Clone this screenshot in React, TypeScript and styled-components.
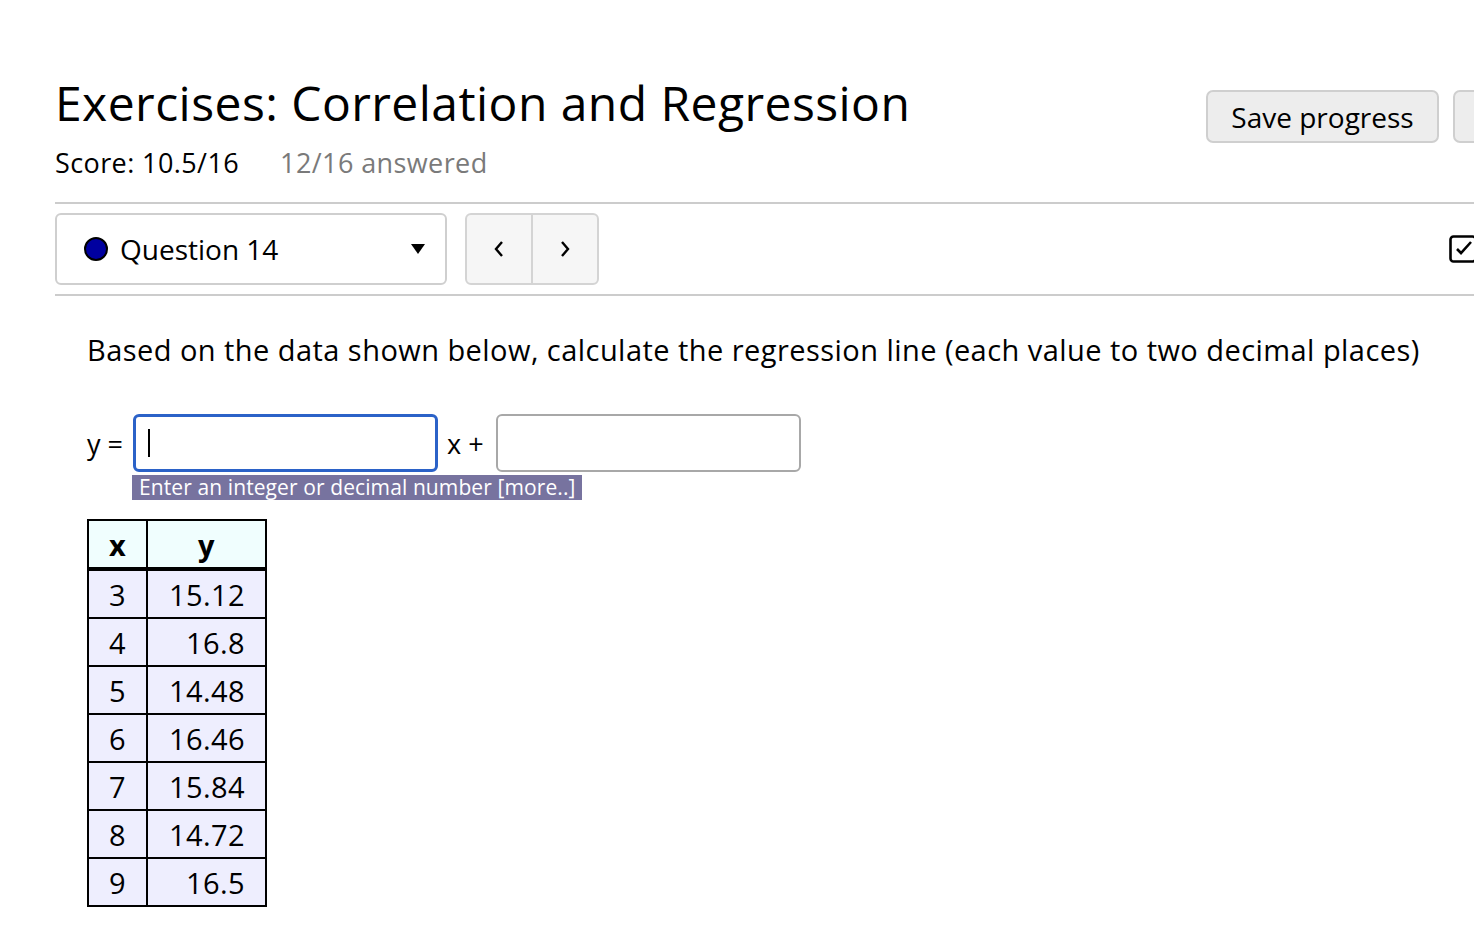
import React from "react";
import styled, { createGlobalStyle } from "styled-components";

const Global = createGlobalStyle`
  html, body { margin: 0; padding: 0; background: #fff; overflow: hidden; }
  body { font-family: "Open Sans", "DejaVu Sans", sans-serif; color: #000; }
`;

const Page = styled.div`
  width: 1518px;
  padding: 76px 0 0 55px;
`;

const Header = styled.div`
  display: flex;
  align-items: flex-start;
`;

const TitleBlock = styled.div`
  flex: 1;
`;

const Title = styled.h1`
  margin: 0;
  font-size: 48px;
  letter-spacing: 0.45px;
  line-height: 54px;
  font-weight: 400;
`;

const ScoreLine = styled.div`
  margin-top: 15px;
  display: flex;
  gap: 41px;
  font-size: 27px;
  letter-spacing: 0.4px;
  line-height: 36px;
`;

const Muted = styled.span`
  color: #7a7a7a;
`;

const HeaderButtons = styled.div`
  display: flex;
  gap: 14px;
  margin-top: 14px;
`;

const Button = styled.button<{ $w: number }>`
  width: ${(p) => p.$w}px;
  height: 53px;
  border: 2px solid #cfcfcf;
  border-radius: 7px;
  background: #ededed;
  font-family: "Open Sans", sans-serif;
  font-size: 28px;
  color: #000;
  padding: 0;
`;

const Rule = styled.div`
  height: 2px;
  background: #cccccc;
`;

const RuleTop = styled(Rule)`
  margin-top: 21px;
`;

const QuestionBar = styled.div`
  display: flex;
  align-items: center;
  gap: 18px;
  padding: 9px 0 9px 0;
`;

const Select = styled.div`
  width: 392px;
  height: 72px;
  box-sizing: border-box;
  border: 2px solid #cfcfcf;
  border-radius: 6px;
  display: flex;
  align-items: center;
  padding: 0 20px 0 27px;
  font-size: 28px;
`;

const Dot = styled.span`
  width: 20px;
  height: 20px;
  border-radius: 50%;
  background: #0000a0;
  border: 2px solid #000;
  margin-right: 12px;
`;

const SelectLabel = styled.span`
  flex: 1;
`;

const NavGroup = styled.div`
  display: flex;
  height: 72px;
  box-sizing: border-box;
  border: 2px solid #d4d4d4;
  border-radius: 6px;
  background: #f6f6f6;
  overflow: hidden;
`;

const NavButton = styled.div<{ $divider?: boolean }>`
  width: 64px;
  display: flex;
  align-items: center;
  justify-content: center;
  border-left: ${(p) => (p.$divider ? "2px solid #d4d4d4" : "none")};
`;

const Spacer = styled.div`
  flex: 1;
`;

const CheckIcon = styled.div`
  margin-right: 96px;
  display: flex;
`;

const Content = styled.div`
  padding: 32px 0 0 32px;
`;

const Prompt = styled.p`
  margin: 0;
  font-size: 29px;
  letter-spacing: 0.45px;
  line-height: 44px;
`;

const AnswerRow = styled.div`
  margin-top: 42px;
  display: flex;
  align-items: center;
  font-size: 27px;
`;

const Label = styled.span<{ $gap: number }>`
  margin-right: ${(p) => p.$gap}px;
`;

const FieldWrap = styled.div`
  position: relative;
  margin-right: 9px;
`;

const Field = styled.div<{ $focused?: boolean }>`
  width: 305px;
  height: 58px;
  box-sizing: border-box;
  border-radius: 6px;
  border: ${(p) => (p.$focused ? "3px solid #2b62c8" : "2px solid #a8a8a8")};
  display: flex;
  align-items: center;
  padding-left: 12px;
  background: #fff;
`;

const Caret = styled.span`
  width: 2px;
  height: 28px;
  background: #000;
`;

const Tip = styled.div`
  position: absolute;
  left: -1px;
  top: 61px;
  white-space: nowrap;
  background: #77739f;
  color: #fff;
  font-size: 21px;
  letter-spacing: 0.1px;
  line-height: 25px;
  padding: 0 7px;
`;

const DataTable = styled.table`
  margin-top: 47px;
  border-collapse: collapse;
  font-size: 29px;
  letter-spacing: 0.4px;
`;

const Th = styled.th<{ $w: number }>`
  width: ${(p) => p.$w}px;
  height: 46px;
  padding: 0;
  background: #f0fefe;
  border: 2px solid #000;
  border-bottom: 4px solid #000;
  font-weight: 700;
  text-align: center;
`;

const Td = styled.td<{ $right?: boolean }>`
  height: 46px;
  padding: 0 ${(p) => (p.$right ? "20px" : "0")} 0 0;
  background: #eeeefe;
  border: 2px solid #000;
  text-align: ${(p) => (p.$right ? "right" : "center")};
`;

const rows: [number, string][] = [
  [3, "15.12"],
  [4, "16.8"],
  [5, "14.48"],
  [6, "16.46"],
  [7, "15.84"],
  [8, "14.72"],
  [9, "16.5"],
];

export default function App() {
  return (
    <>
      <Global />
      <Page>
        <Header>
          <TitleBlock>
            <Title>Exercises: Correlation and Regression</Title>
            <ScoreLine>
              <span>Score: 10.5/16</span>
              <Muted>12/16 answered</Muted>
            </ScoreLine>
          </TitleBlock>
          <HeaderButtons>
            <Button $w={233}>Save progress</Button>
            <Button $w={120} aria-label="Submit" />
          </HeaderButtons>
        </Header>
        <RuleTop />
        <QuestionBar>
          <Select>
            <Dot />
            <SelectLabel>Question 14</SelectLabel>
            <svg width="14" height="10" viewBox="0 0 14 10">
              <polygon points="0,0 14,0 7,10" fill="#000" />
            </svg>
          </Select>
          <NavGroup>
            <NavButton>
              <svg width="12" height="18" viewBox="0 0 12 18">
                <polyline points="9,2 3,9 9,16" fill="none" stroke="#000" strokeWidth="2.4" />
              </svg>
            </NavButton>
            <NavButton $divider>
              <svg width="12" height="18" viewBox="0 0 12 18">
                <polyline points="3,2 9,9 3,16" fill="none" stroke="#000" strokeWidth="2.4" />
              </svg>
            </NavButton>
          </NavGroup>
          <Spacer />
          <CheckIcon>
            <svg width="28" height="28" viewBox="0 0 28 28">
              <rect x="1.5" y="1.5" width="25" height="25" rx="3" fill="none" stroke="#000" strokeWidth="2.6" />
              <polyline points="8,14 12,18 22,7" fill="none" stroke="#000" strokeWidth="2.6" />
            </svg>
          </CheckIcon>
        </QuestionBar>
        <Rule />
        <Content>
          <Prompt>
            Based on the data shown below, calculate the regression line (each value to two decimal places)
          </Prompt>
          <AnswerRow>
            <Label $gap={10}>y =</Label>
            <FieldWrap>
              <Field $focused>
                <Caret />
              </Field>
              <Tip>Enter an integer or decimal number [more..]</Tip>
            </FieldWrap>
            <Label $gap={12}>x +</Label>
            <Field />
          </AnswerRow>
          <DataTable>
            <thead>
              <tr>
                <Th $w={57}>x</Th>
                <Th $w={117}>y</Th>
              </tr>
            </thead>
            <tbody>
              {rows.map(([x, y]) => (
                <tr key={x}>
                  <Td>{x}</Td>
                  <Td $right>{y}</Td>
                </tr>
              ))}
            </tbody>
          </DataTable>
        </Content>
      </Page>
    </>
  );
}
